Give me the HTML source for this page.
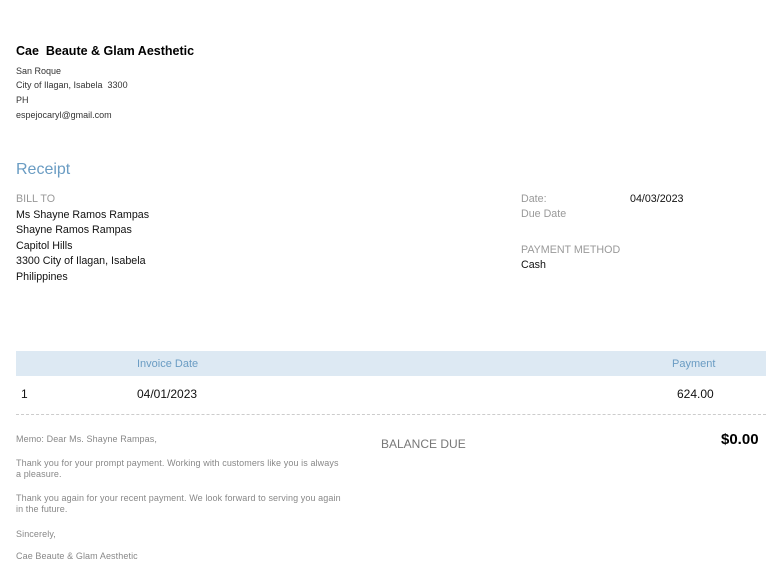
<!DOCTYPE html><html><head><style>
body{margin:0;width:783px;height:569px;background:#fff;font-family:"Liberation Sans",Arial,sans-serif;position:relative;overflow:hidden;color:#222}
div{position:absolute;white-space:nowrap}
.s{font-size:9px;color:#333}
.m{font-size:10.7px;color:#111}
.g{font-size:10.7px;color:#999}
.memo{font-size:9px;color:#888;line-height:11px;letter-spacing:0.1px}
</style></head><body>
<div style="left:16px;top:44px;font-size:12.5px;font-weight:bold;color:#000">Cae&nbsp; Beaute &amp; Glam Aesthetic</div>
<div class="s" style="left:16px;top:66px">San Roque</div>
<div class="s" style="left:16px;top:80px">City of Ilagan, Isabela&nbsp; 3300</div>
<div class="s" style="left:16px;top:95px">PH</div>
<div class="s" style="left:16px;top:110px">espejocaryl@gmail.com</div>
<div style="left:16px;top:161px;font-size:16px;color:#6a9cc3">Receipt</div>
<div class="g" style="left:16px;top:193px">BILL TO</div>
<div class="m" style="left:16px;top:209px">Ms Shayne Ramos Rampas</div>
<div class="m" style="left:16px;top:224px">Shayne Ramos Rampas</div>
<div class="m" style="left:16px;top:240px">Capitol Hills</div>
<div class="m" style="left:16px;top:255px">3300 City of Ilagan, Isabela</div>
<div class="m" style="left:16px;top:271px">Philippines</div>
<div class="g" style="left:521px;top:193px">Date:</div>
<div class="m" style="left:630px;top:193px">04/03/2023</div>
<div class="g" style="left:521px;top:208px">Due Date</div>
<div class="g" style="left:521px;top:244px">PAYMENT METHOD</div>
<div class="m" style="left:521px;top:259px">Cash</div>
<div style="left:16px;top:351px;width:750px;height:25px;background:#dde9f3"></div>
<div style="left:137px;top:358px;font-size:11px;color:#6a9cc3">Invoice Date</div>
<div style="left:672px;top:358px;font-size:11px;color:#6a9cc3">Payment</div>
<div class="m" style="left:21px;top:387px;font-size:12px">1</div>
<div class="m" style="left:137px;top:387px;font-size:12px">04/01/2023</div>
<div class="m" style="left:677px;top:387px;font-size:12px">624.00</div>
<div style="left:16px;top:414px;width:750px;border-top:1px dashed #ccc"></div>
<div class="memo" style="left:16px;top:434px">Memo: Dear Ms. Shayne Rampas,</div>
<div style="left:381px;top:437px;font-size:12px;color:#777">BALANCE DUE</div>
<div style="left:721px;top:431px;font-size:15px;font-weight:bold;color:#000">$0.00</div>
<div class="memo" style="left:16px;top:458px">Thank you for your prompt payment. Working with customers like you is always<br>a pleasure.</div>
<div class="memo" style="left:16px;top:493px">Thank you again for your recent payment. We look forward to serving you again<br>in the future.</div>
<div class="memo" style="left:16px;top:529px">Sincerely,</div>
<div class="memo" style="left:16px;top:551px">Cae Beaute &amp; Glam Aesthetic</div>
</body></html>
